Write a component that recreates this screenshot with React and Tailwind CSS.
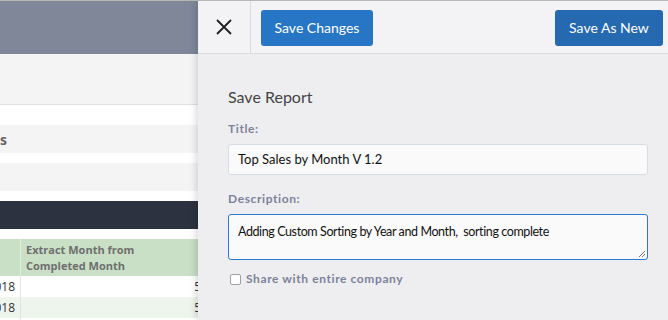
import React from "react";

const lato = { fontFamily: "Lato, 'Open Sans', sans-serif" };

const LeftPane = () => (
    <div className="w-[198px] shrink-0 overflow-hidden font-['Open_Sans',sans-serif]">
        {/* Report header band */}
        <div className="h-[53px] bg-[#7f8799]" />
        <div className="h-[51px] bg-[#f4f4f4] border-b border-[#e0e0e0]" />
        <div className="h-[20px] bg-white" />
        <div className="h-[28px] bg-[#f4f4f4] flex items-center text-[14px] font-bold text-[#666]">
            <span>s</span>
        </div>
        <div className="h-[10px] bg-white" />
        <div className="h-[28px] bg-[#f4f4f4]" />
        <div className="h-[10px] bg-white" />
        <div className="h-[28px] bg-[#2d3240]" />
        <div className="h-[10px] bg-white" />

        {/* Table */}
        <div className="flex h-[37px] bg-[#c9dfc6]">
            <div className="w-[21px] border-r border-[#e3ece1]" />
            <div className="pl-[5px] pt-[3px] text-[11px] leading-[16px] font-bold text-[#6f6f6f] whitespace-nowrap">
                Extract Month from<br />Completed Month
            </div>
        </div>
        {["bg-white", "bg-[#edf5ec]", "bg-white"].map((bg, i) => (
            <div key={i} className={`flex h-[21px] text-[12px] text-[#333] ${bg}`}>
                <div className="w-[21px] border-r border-[#e3e3e3] flex items-center justify-end pr-[5px]">
                    <span className="whitespace-nowrap">018</span>
                </div>
                <div className="flex-1 flex items-center justify-end -mr-[3px]">5</div>
            </div>
        ))}
    </div>
);

const XIcon = () => (
    <svg width="18" height="18" viewBox="0 0 18 18" fill="none" stroke="#1f1f1f" strokeWidth="1.8">
        <path d="M2 2 L16 16 M16 2 L2 16" />
    </svg>
);

const SavePanel = () => (
    <div className="flex-1 bg-[#eeeef1] shadow-[-3px_0_6px_rgba(0,0,0,0.12)] relative" style={lato}>
        {/* Top bar */}
        <div className="h-[53px] bg-[#f3f3f5] border-b border-[#dcdcdf] flex items-center">
            <div className="w-[53px] h-full border-r border-[#dcdcdf] flex items-center justify-center">
                <XIcon />
            </div>
            <button className="ml-[10px] mt-[1px] w-[112px] h-[36px] rounded-[3px] bg-[#2776c6] text-white text-[14px]">
                Save Changes
            </button>
            <div className="flex-1" />
            <button className="mr-[5px] mt-[1px] w-[108px] h-[36px] rounded-[3px] bg-[#2569b0] text-white text-[14px]">
                Save As New
            </button>
        </div>

        {/* Form */}
        <div className="pl-[30px] pr-[20px] pt-[33px]">
            <h2 className="text-[16px] leading-[20px] text-[#444]">Save Report</h2>
            <label className="block mt-[15px] text-[12px] leading-[14px] font-bold tracking-[0.6px] text-[#7b8399]">
                Title:
            </label>
            <div className="mt-[8px] h-[31px] rounded-[3px] border border-[#d6dce6] bg-[#fafafa] flex items-center pl-[9px] text-[13px] text-[#111]">
                Top Sales by Month V 1.2
            </div>
            <label className="block mt-[17px] text-[12px] leading-[14px] font-bold tracking-[0.6px] text-[#7b8399]">
                Description:
            </label>
            <div className="mt-[8px] h-[46px] rounded-[3px] border border-[#2a7ad2] bg-[#fafafa] pl-[9px] pt-[8px] text-[12.5px] tracking-[-0.4px] text-[#111] relative">
                Adding Custom Sorting by Year and Month,&nbsp; sorting complete
                <svg className="absolute right-[1px] bottom-[1px]" width="8" height="8" viewBox="0 0 8 8" stroke="#777" strokeWidth="1">
                    <path d="M7 1 L1 7 M7 4 L4 7" />
                </svg>
            </div>
            <div className="mt-[10px] flex items-center gap-[5px]">
                <span className="ml-[2px] w-[11px] h-[11px] rounded-[2px] border border-[#9aa0a8] bg-white" />
                <span className="text-[12px] font-bold tracking-[0.6px] text-[#7b8399]">Share with entire company</span>
            </div>
        </div>
    </div>
);

const App = () => {
    return (
        <div className="w-[668px] h-[320px] overflow-hidden bg-white border-t border-[#b6b6b6] flex">
            <LeftPane />
            <SavePanel />
        </div>
    );
};

export default App;
